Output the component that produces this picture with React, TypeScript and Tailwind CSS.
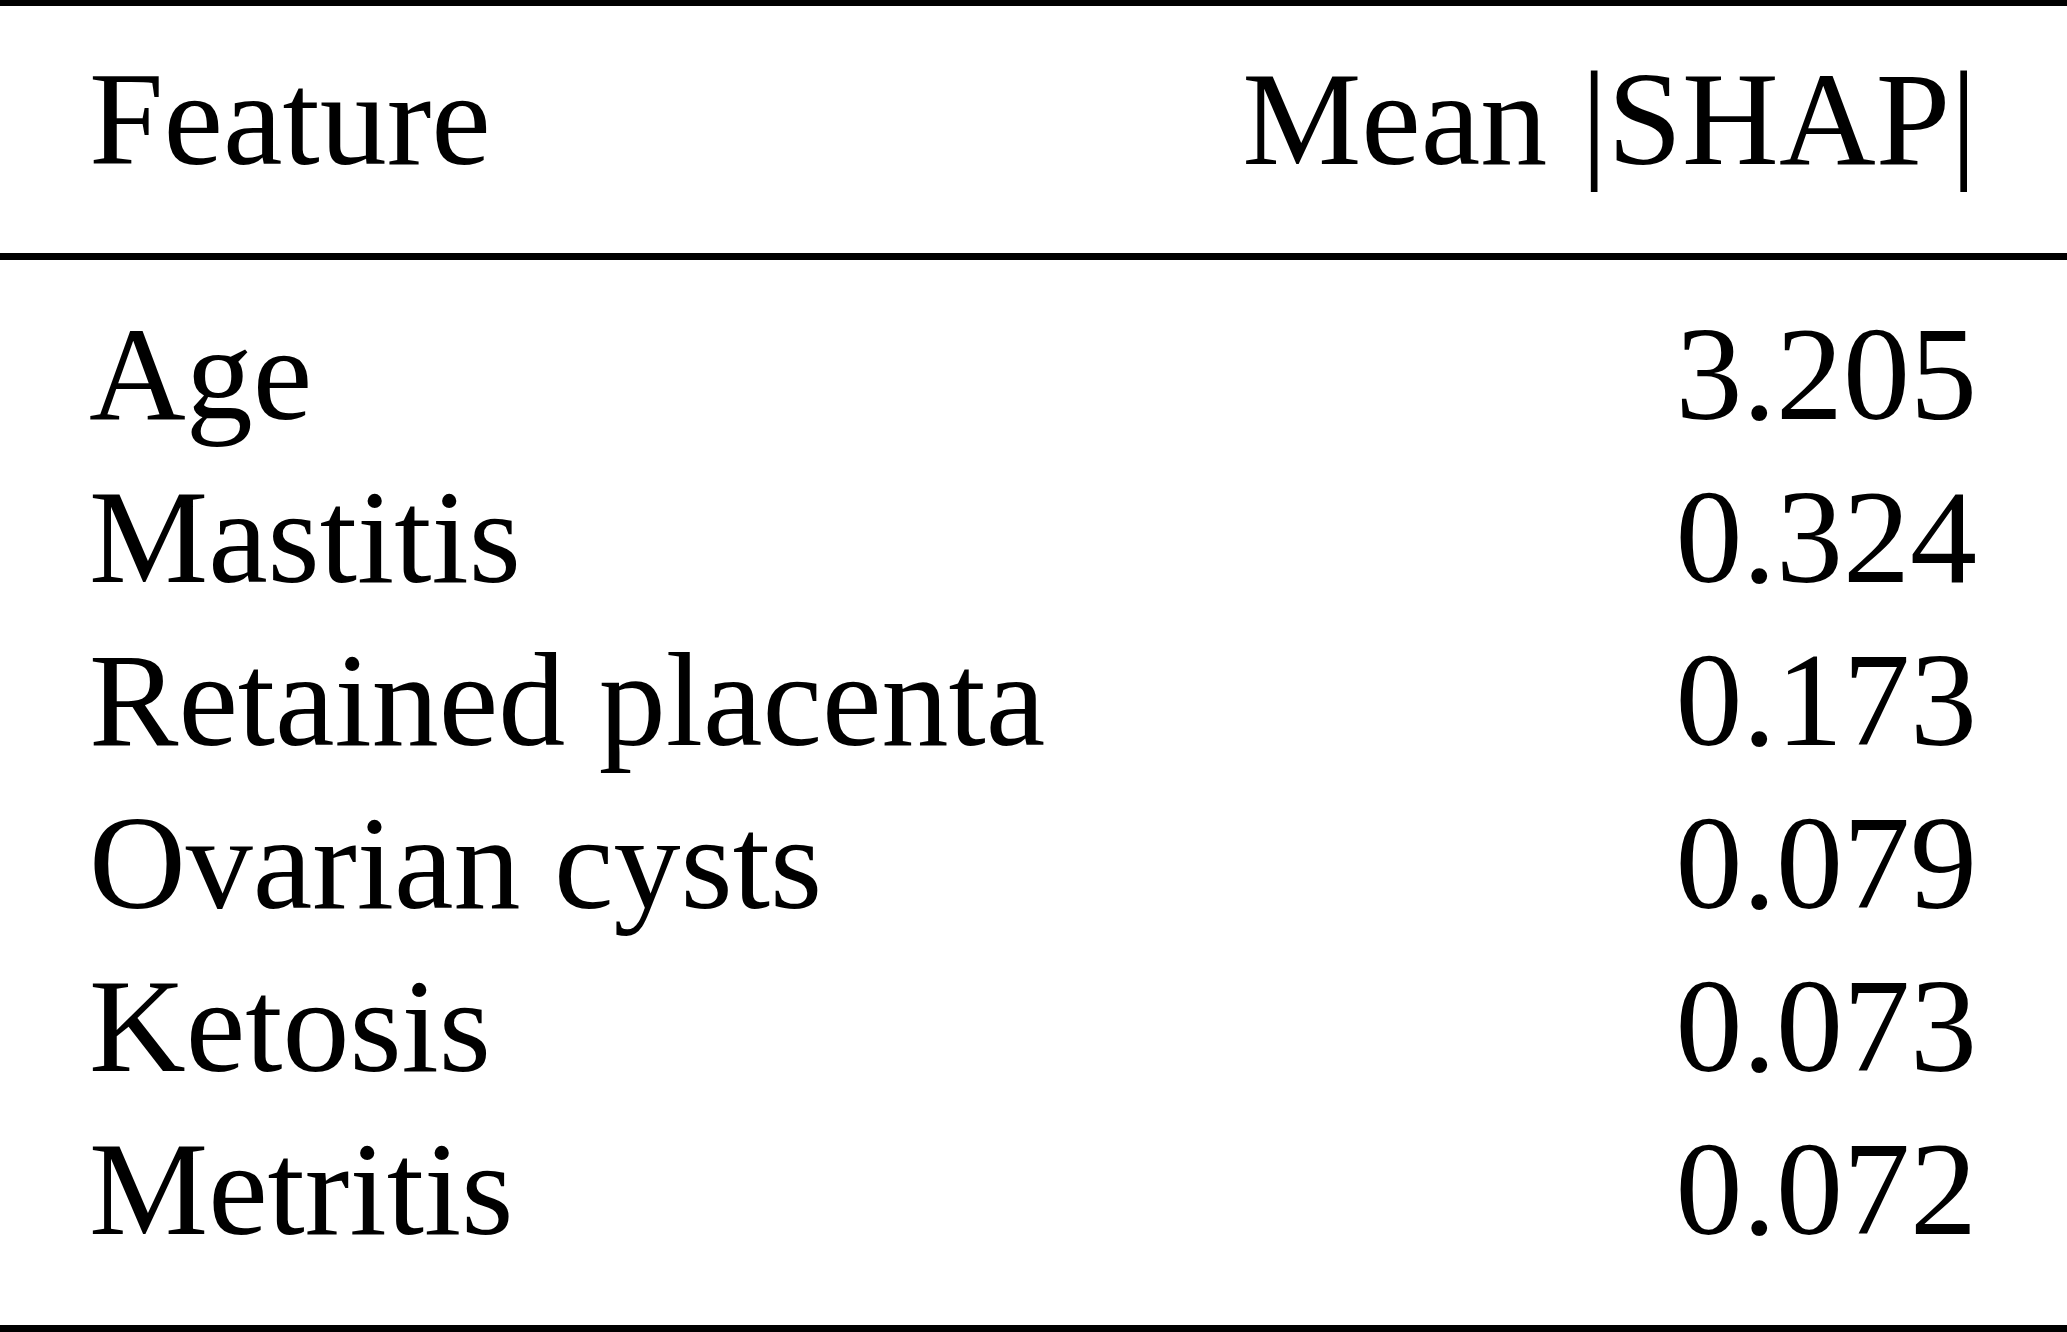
const rows: [string, string][] = [
  ["Age", "3.205"],
  ["Mastitis", "0.324"],
  ["Retained placenta", "0.173"],
  ["Ovarian cysts", "0.079"],
  ["Ketosis", "0.073"],
  ["Metritis", "0.072"],
];

export default function App() {
  return (
    <div className="w-[2067px] h-[1332px] bg-white text-black font-['Liberation_Serif','Times_New_Roman',serif] text-[134px] overflow-hidden">
      <div className="h-[6px] bg-black" />
      <div className="flex justify-between pl-[89px] pr-[90px] pt-[47px] pb-[68px] leading-[132px]">
        <span>Feature</span>
        <span>Mean |SHAP|</span>
      </div>
      <div className="h-[7px] bg-black" />
      <div className="flex flex-col pl-[89px] pr-[90px] pt-[33px] pb-[54px]">
        {rows.map(([name, value]) => (
          <div key={name} className="flex justify-between leading-[163px]">
            <span>{name}</span>
            <span>{value}</span>
          </div>
        ))}
      </div>
      <div className="h-[7px] bg-black" />
    </div>
  );
}
